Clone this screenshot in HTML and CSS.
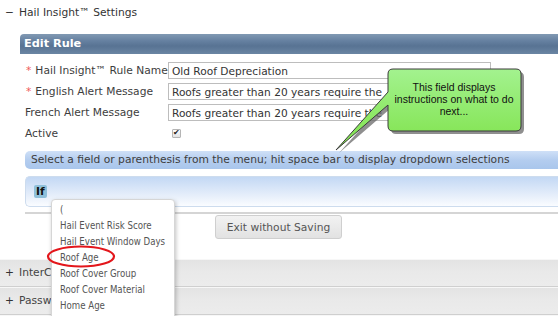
FILE: index.html
```html
<!DOCTYPE html>
<html lang="en">
<head>
    <meta charset="UTF-8">
    <title>Hail Insight Settings</title>
    <link rel="stylesheet" href="styles.css">
</head>
<body>
    <div class="page">
        <div class="section-title"><span class="toggle">&minus;</span>Hail Insight&trade; Settings</div>
        <div class="panel">
            <div class="panel-head">Edit Rule</div>
            <div class="panel-body">
                <div class="form-row">
                    <label><span class="star">*</span>Hail Insight&trade; Rule Name</label>
                    <input type="text" class="text-field" value="Old Roof Depreciation">
                </div>
                <div class="form-row">
                    <label><span class="star">*</span>English Alert Message</label>
                    <input type="text" class="text-field" value="Roofs greater than 20 years require the">
                </div>
                <div class="form-row">
                    <label>French Alert Message</label>
                    <input type="text" class="text-field" value="Roofs greater than 20 years require the">
                </div>
                <div class="form-row active-row">
                    <label>Active</label>
                    <input type="checkbox" class="check" checked>
                </div>
                <div class="hint-bar">Select a field or parenthesis from the menu; hit space bar to display dropdown selections</div>
                <div class="expr-box"><span class="token">If</span></div>
                <div class="actions">
                    <button class="btn">Exit without Saving</button>
                </div>
            </div>
        </div>
        <div class="accordion-row"><span class="toggle">+</span>InterConnect Settings</div>
        <div class="accordion-row"><span class="toggle">+</span>Password Settings</div>
        <div class="accordion-row"></div>

        <ul class="dropdown">
            <li>(</li>
            <li>Hail Event Risk Score</li>
            <li>Hail Event Window Days</li>
            <li>Roof Age</li>
            <li>Roof Cover Group</li>
            <li>Roof Cover Material</li>
            <li>Home Age</li>
        </ul>

        <svg class="circle-mark" width="72" height="26" viewBox="0 0 72 26">
            <ellipse cx="35" cy="12.5" rx="33" ry="10" fill="none" stroke="#e3161b" stroke-width="2.2"/>
        </svg>

        <div class="callout">
            <svg width="200" height="96" viewBox="330 64 200 96">
                <defs>
                    <linearGradient id="calloutFill" x1="0" y1="0" x2="0" y2="1">
                        <stop offset="0" stop-color="#a3f28f"/>
                        <stop offset="1" stop-color="#7fe24a"/>
                    </linearGradient>
                </defs>
                <!-- drop shadow -->
                <path transform="translate(3 3)" fill="#6a6a6a" opacity="0.75"
                      d="M393 69 H516 Q521 69 521 74 V126 Q521 131 516 131 H393 Q388 131 388 126 V105 L336 150 L388 92 V74 Q388 69 393 69 Z"/>
                <path fill="url(#calloutFill)" stroke="#3a3a3a" stroke-width="1"
                      d="M393 69 H516 Q521 69 521 74 V126 Q521 131 516 131 H393 Q388 131 388 126 V105 L336 150 L388 92 V74 Q388 69 393 69 Z"/>
            </svg>
            <p>This field displays instructions on what to do next...</p>
        </div>
    </div>
</body>
</html>
```

FILE: styles.css
```css
body {
    margin: 0;
    font-family: "DejaVu Sans", Verdana, sans-serif;
    font-size: 10.7px;
    color: #3d3d3d;
    background: #fff;
}
.page {
    position: relative;
    width: 558px;
    height: 316px;
    overflow: hidden;
}
.toggle {
    display: inline-block;
    width: 14px;
    margin-left: 5px;
    color: #333;
}
.section-title {
    height: 26px;
    line-height: 26px;
    color: #333;
}
.panel {
    margin: 8px 0 0 20px;
}
.panel-head {
    height: 20px;
    line-height: 20px;
    padding-left: 4px;
    border-radius: 4px 0 0 0;
    background: linear-gradient(#8199b3, #6580a0 35%, #587393 60%, #6a85a3);
    color: #fff;
    font-weight: bold;
    font-size: 11.3px;
}
.panel-body {
    padding: 8px 0 20px 5px;
}
.form-row {
    display: flex;
    align-items: center;
    height: 17px;
    margin-bottom: 4px;
}
.form-row label {
    width: 143px;
    flex: none;
    white-space: nowrap;
}
.star {
    color: #f05a5a;
    margin: 0 4px 0 1px;
}
.text-field {
    width: 323px;
    height: 17px;
    box-sizing: border-box;
    margin: 0;
    padding: 0 3px;
    border: 1px solid #bdbdbd;
    font-family: inherit;
    font-size: 10.6px;
    color: #333;
}
.active-row {
    margin-top: 4px;
}
.check {
    appearance: none;
    position: relative;
    width: 9px;
    height: 9px;
    margin: 0 0 0 4px;
    border: 1px solid #b5b5b5;
    border-radius: 1px;
    background: linear-gradient(#fdfdfd, #e3e3e3);
}
.check:checked::after {
    content: "\2714";
    position: absolute;
    left: 0;
    top: -2px;
    font-size: 8px;
    color: #222;
}
.hint-bar {
    margin-top: 9px;
    height: 18px;
    line-height: 18px;
    padding-left: 6px;
    border-radius: 5px 0 0 5px;
    background: linear-gradient(#cfe0f7, #b4cdef 50%, #a9c6ec);
    color: #3d3d3d;
    white-space: nowrap;
}
.expr-box {
    margin-top: 7px;
    height: 29px;
    display: flex;
    align-items: center;
    padding-left: 8px;
    border: 1px solid #cddcee;
    border-right: none;
    border-radius: 5px 0 0 5px;
    background: linear-gradient(#c3d8f4, #e4edfa 60%, #fafcff);
}
.token {
    padding: 0 2px;
    border-radius: 2px;
    background: #8fc0da;
    color: #111;
    font-weight: bold;
}
.actions {
    margin-top: 5px;
    border-top: 2px solid #d5d5d5;
    padding-top: 1px;
    padding-left: 190px;
}
.btn {
    width: 127px;
    height: 24px;
    border: 1px solid #cfcfcf;
    border-radius: 3px;
    background: linear-gradient(#f2f2f2, #e2e2e2);
    font-family: inherit;
    font-size: 10.7px;
    color: #555;
}
.accordion-row {
    height: 26px;
    line-height: 26px;
    border-top: 1px solid #f7f7f7;
    border-bottom: 1px solid #cfcfcf;
    background: linear-gradient(#e3e3e3, #e9e9e9 45%, #ececec);
    color: #444;
}
.dropdown {
    position: absolute;
    left: 51px;
    top: 199px;
    width: 122px;
    height: 130px;
    margin: 0;
    padding: 2px 0 0 0;
    list-style: none;
    background: #fff;
    border: 1px solid #d6d6d6;
    border-radius: 4px;
    box-shadow: 1px 2px 4px rgba(0, 0, 0, 0.25);
    font-family: "DejaVu Sans Condensed", "DejaVu Sans", sans-serif;
    font-size: 9.6px;
    color: #555;
}
.dropdown li {
    height: 16px;
    line-height: 16px;
    padding-left: 8px;
    white-space: nowrap;
}
.circle-mark {
    position: absolute;
    left: 46px;
    top: 244px;
}
.callout {
    position: absolute;
    left: 330px;
    top: 64px;
    width: 200px;
    height: 96px;
}
.callout svg {
    display: block;
}
.callout p {
    position: absolute;
    left: 59px;
    top: 17px;
    width: 130px;
    margin: 0;
    font-family: "Liberation Sans", Arial, sans-serif;
    font-size: 10.5px;
    line-height: 12px;
    text-align: center;
    color: #111;
}
```
